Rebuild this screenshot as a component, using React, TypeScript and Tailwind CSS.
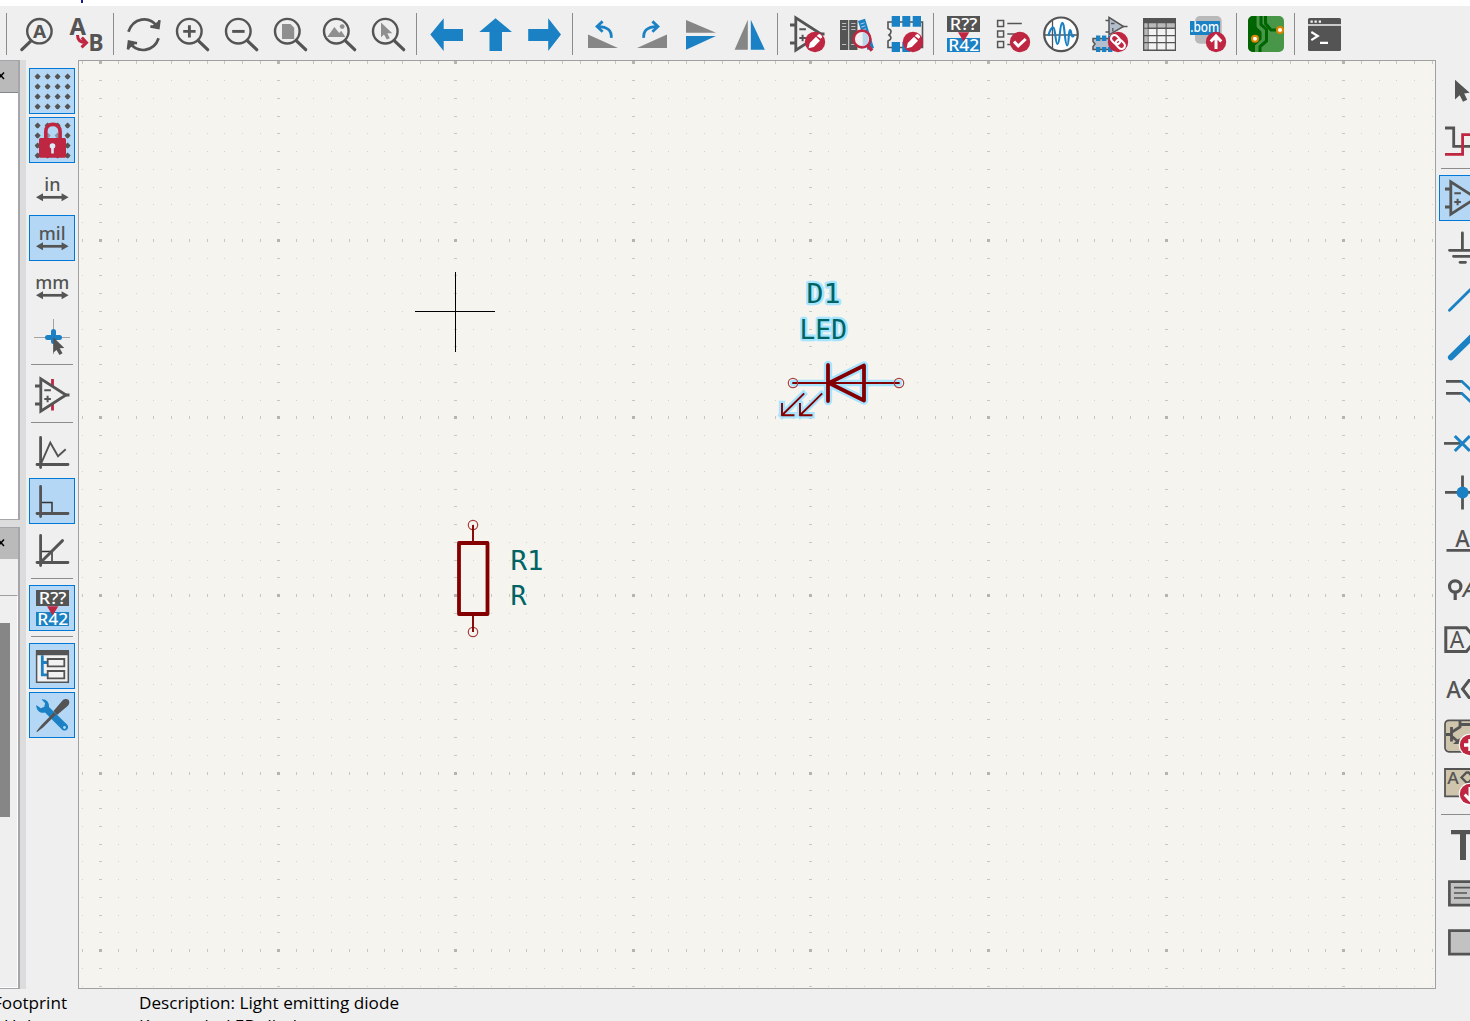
import React from "react";

const D = "#545454";
const B = "#1a81c4";
const R = "#bf2641";
const NOTO = '"Noto Sans", sans-serif';

type Kids = { children?: React.ReactNode };

function Icon({ children }: Kids) {
  return (
    <svg width="36" height="36" viewBox="0 0 36 36" fill="none" className="block shrink-0 overflow-visible">
      {children}
    </svg>
  );
}

function Label({ x, y, size, w, color = D, weight = 600, children }: { x: number; y: number; size: number; w?: number; color?: string; weight?: number; children: string }) {
  return (
    <text x={x} y={y} fontSize={size} fontWeight={weight} fontFamily={NOTO} fill={color} textLength={w} lengthAdjust="spacingAndGlyphs">
      {children}
    </text>
  );
}

function Badge({ kind }: { kind: "edit" | "check" | "link" | "up" | "plus" | "down" }) {
  return (
    <g>
      <circle cx="26" cy="26" r="10.2" fill={R} />
      {kind === "edit" && <path d="M19.6 32.2l1.2-5.200 6.200-6.200 4 4-6.200 6.200zM27.800 20l1.500-1.500q1.300-1 2.700.400t1.200 2.400l-1.500 1.500z" fill="#fff" />}
      {kind === "check" && <path d="M20 25.5l4.2 4.5 7.5-7" stroke="#fff" strokeWidth="3" />}
      {kind === "link" && (
        <g stroke="#fff" strokeWidth="2.100" transform="rotate(45 26 26)">
          <rect x="17.600" y="22.600" width="10.200" height="6.800" rx="3.400" />
          <rect x="24.200" y="22.600" width="10.200" height="6.800" rx="3.400" />
        </g>
      )}
      {kind === "up" && <path d="M26 33V20.5M20.7 25.5L26 20l5.3 5.5" stroke="#fff" strokeWidth="3" />}
      {kind === "plus" && <path d="M26 20v12M20 26h12" stroke="#fff" strokeWidth="3.4" />}
      {kind === "down" && <path d="M26 19v12.5M20.7 26.5L26 32l5.3-5.5" stroke="#fff" strokeWidth="3" />}
    </g>
  );
}

const Find = () => (
  <Icon>
    <circle cx="20.4" cy="15.2" r="12.2" stroke={D} strokeWidth="2.4" />
    <path d="M12 24.8L2.8 33.6" stroke={D} strokeWidth="3.2" strokeLinecap="round" />
    <Label x={13.9} y={21.6} size={18.5} w={13.2} weight={700}>A</Label>
  </Icon>
);
const FindReplace = () => (
  <Icon>
    <Label x={1.5} y={18.6} size={22.5} w={16.5} weight={700}>A</Label>
    <Label x={20.5} y={34.8} size={22.5} w={15} weight={700}>B</Label>
    <path d="M9.5 19c0 5 2.5 7.6 8.5 7.7M13.8 21.6l4.7 5.1-5 4.7" stroke={R} strokeWidth="3" />
  </Icon>
);
const Refresh = () => (
  <Icon>
    <path d="M3.4 15.8C8 2 24-1 32.3 10.5M34.4 4.2l-1 7.8-8-1.6M33.6 22.3C29 36 12 38 4.7 26.3M3 33.5l1-7.8 8 1.6" stroke={D} strokeWidth="2.7" />
    <path d="M34.4 4.2l-1 7.8-7-1.6zM3 33.5l1-7.8 7 1.6z" fill={D} />
  </Icon>
);
function Lens({ children }: Kids) {
  return (
    <Icon>
      {children}
      <circle cx="15.3" cy="15.2" r="12.3" stroke={D} strokeWidth="2.4" />
      <path d="M24.5 24.8l9.2 8.9" stroke={D} strokeWidth="3.2" strokeLinecap="round" />
    </Icon>
  );
}
const ZoomIn = () => <Lens><path d="M9.2 15.4h12.4M15.4 9.2v12.4" stroke={D} strokeWidth="2.9" /></Lens>;
const ZoomOut = () => <Lens><path d="M9.2 15.4h12.4" stroke={D} strokeWidth="2.9" /></Lens>;
const ZoomPage = () => <Lens><path d="M10 8h8.5l3.7 3.7V23H10z" fill="#8f8f8f" /></Lens>;
const ZoomObjects = () => (
  <Lens>
    <path d="M6.2 21l7.2-10 4.8 6 2-2.2 4.2 6.2z" fill="#8f8f8f" />
    <circle cx="21.2" cy="10.6" r="2.4" fill="#8f8f8f" />
  </Lens>
);
const ZoomSelection = () => <Lens><path d="M11 6.5v14.8l3-2.7 2.8 5 3-1.4-2.5-4.9h5z" fill="#8f8f8f" /></Lens>;

const ArrowL = () => <Icon><path d="M1.3 18.5L14.7 2.3V13H34v12H14.7v10z" fill={B} /></Icon>;
const ArrowU = () => <Icon><path d="M17.5 2.3L34 16H24v19H11.5V16H1.3z" fill={B} /></Icon>;
const ArrowR = () => <Icon><path d="M34 18.5L21.200 2.3V13h-20v12h20v10z" fill={B} /></Icon>;

function RotShape() {
  return (
    <>
      <path d="M3 18.5L33 32H3z" fill="#868686" />
      <path d="M26.3 21.8c.4-7-3.8-11.2-12.8-11.2M17.6 5.4l-5.5 5.1 5.5 5.2" stroke={B} strokeWidth="2.8" />
    </>
  );
}
const RotL = () => <Icon><RotShape /></Icon>;
const RotR = () => <Icon><g transform="translate(36 0) scale(-1 1)"><RotShape /></g></Icon>;
const FlipV = () => <Icon><path d="M3 4v12.7h30z" fill="#868686" /><path d="M3 20h30L3 33.7z" fill={B} /></Icon>;
const FlipH = () => <Icon><path d="M2.600 33.7h13.200v-30z" fill="#868686" /><path d="M18.800 33.7h14l-14-30z" fill={B} /></Icon>;

function OpAmp({ pins = false }: { pins?: boolean }) {
  return (
    <>
      {pins && <path d="M18.5 2v7M18.5 26.5v7" stroke={R} strokeWidth="2.8" />}
      <path d="M6.8 1.8v32.4L32 18z" stroke={D} strokeWidth="2.8" />
      <path d="M1 9h5.5M1 27h5.5M31 18h4.5" stroke={D} strokeWidth="2.8" />
      <path d="M10.3 13.2h6.6M10.3 22h6.6M13.6 18.7v6.6" stroke={D} strokeWidth="2" />
    </>
  );
}
const SymbolEdit = () => <Icon><OpAmp /><Badge kind="edit" /></Icon>;
const Library = () => (
  <Icon>
    <path d="M2 4h8.3v30H2zM11.2 4h8.3v30h-8.3z" fill={D} />
    <path d="M4 7.5h4.3M4 10.5h4.3M4 13.5h4.3M4 28.5h4.3M13.2 7.5h4.3M13.2 10.5h4.3M13.2 13.5h4.3M13.2 28.5h4.3" stroke="#bbb" strokeWidth="1" />
    <path d="M20 5l7-2.2L36 32l-6.5 2z" fill={B} />
    <path d="M22.5 8l4-1.2M23.4 11l4-1.2M24.3 14l4-1.2" stroke="#a8cde8" strokeWidth="1" />
    <circle cx="24" cy="23" r="8.4" fill="#f0f0f0" stroke={R} strokeWidth="2.6" />
    <path d="M24.600 16v14.500a7.400 7.400 0 0 0 0-14.500" fill="#b9d5ec" />
    <path d="M29.500 29.200l4.500 5.500" stroke={R} strokeWidth="3.400" />
  </Icon>
);
const FootprintEdit = () => (
  <Icon>
    <path d="M1 6h34.500v25.500H1V25q3-1.500 3-3t-2-3q2-1.500 2-3.500t-3-3z" fill="#f0f0f0" stroke={D} strokeWidth="1.600" />
    <path d="M4.700 0H13v10.700H4.700zM15.300 0h8v10.700h-8zM25.700 0H34v10.700h-8.300zM4.700 26H13v10H4.700zM15.300 26h8v10h-8z" fill={B} />
    <Badge kind="edit" />
  </Icon>
);
const Annotate = () => (
  <Icon>
    <path d="M2 0h33v16H2z" fill={D} />
    <path d="M2 22h33v14H2z" fill={B} />
    <Label x={4.800} y={13.500} size={16} w={27.500} color="#fff" weight={500}>R??</Label>
    <Label x={3.200} y={34.700} size={16.300} w={31} color="#fff" weight={500}>R42</Label>
    <path d="M13 16.300h11.300L18.600 25.500z" fill={R} />
  </Icon>
);
const Erc = () => (
  <Icon>
    <path d="M3.600 4.600h6v6h-6zM3.600 15h6v6h-6zM3.600 25.600h6v6h-6z" stroke={D} strokeWidth="1.500" />
    <path d="M13.300 7.500h14.500M13.300 18h8M13.300 28.500h5" stroke={D} strokeWidth="1.300" />
    <Badge kind="check" />
  </Icon>
);
const Simulator = () => (
  <Icon>
    <circle cx="18" cy="18.300" r="16.800" fill="#fff" stroke={D} strokeWidth="2.200" />
    <path d="M9.500 4v28M2 19h32.500" stroke={D} strokeWidth="1.300" />
    <path d="M5.500 20c1-6 3.500-9 5-8.300 2 .8 1.800 16.300 4 16.300 2.700 0 2-20.200 4.700-21 2.800-.6 2.300 22.400 5 22.400 2 0 1-14.900 2.800-15.400 1.300-.3 1.200 7 2.800 6.500.6-.2.900-.800 1.200-1.500" stroke={B} strokeWidth="2.100" />
  </Icon>
);
const Assign = () => (
  <Icon>
    <path d="M17 1.300v17.500l14.500-8.300z" fill="#b3bfcc" stroke={D} strokeWidth="1.500" />
    <path d="M13.500 4.500H17M13.500 16H17M31 10.500h4.500M19 7.500h3.500M20.800 12v3.500" stroke={D} strokeWidth="1.300" />
    <path d="M1 22.500h23v11H1v-3l2-2.500-2-2.500z" fill="#b3bfcc" stroke={D} strokeWidth="1.500" />
    <path d="M4 19.500h4.300V25H4zM10 19.500h4.300V25H10zM16 19.500h4.300V25H16zM4 31h4.300v5H4zM10 31h4.300v5H10zM16 31h4.300v5H16z" fill={B} />
    <Badge kind="link" />
  </Icon>
);
const Table = () => (
  <Icon>
    <path d="M2 2h33v33H2z" fill={D} />
    <path d="M3.300 7.200h30.500v4.500H3.300zM3.300 7.200h3.500v26.300H3.300z" fill="#b9b9b9" />
    <path d="M7.600 13h7.700v6H7.600zM16.500 13h8v6h-8zM25.700 13h8.100v6h-8.100zM7.600 20.200h7.700v5.800H7.600zM16.500 20.200h8v5.800h-8zM25.700 20.200h8.100v5.800h-8.100zM7.600 27.300h7.700v6.200H7.600zM16.500 27.300h8v6.200h-8zM25.700 27.300h8.100v6.200h-8.100z" fill="#f2f2f2" />
    <path d="M7.200 7v6M15.900 7v6M25.100 7v6M3 12.300h31M3 19.600h4M3 26.600h4" stroke={D} strokeWidth="1.100" />
  </Icon>
);
const Bom = () => (
  <Icon>
    <rect x="5" y="0" width="26.700" height="27.700" rx="5" fill="#b9b9b9" />
    <path d="M0 5h30v14H0z" fill={B} />
    <Label x={0.200} y={15.800} size={14.500} w={29} color="#fff" weight={500}>.bom</Label>
    <Badge kind="up" />
  </Icon>
);
const Pcb = () => (
  <Icon>
    <rect width="36" height="36" rx="5" fill="#489648" />
    <path d="M5 0h4v11.500l5 4.500v8l-7 5.500V36H5a5 5 0 0 1-5-5V5a5 5 0 0 1 5-5z" fill="#006400" />
    <path d="M13 0v8.500l5.500 5V25L12 30.500V36" stroke="#006400" strokeWidth="3" />
    <path d="M17.500 0v7.500l5.500 6.500h8" stroke="#006400" strokeWidth="3" />
    <path d="M9.800 0v10l5 4.500v9.500L8.500 30v6" stroke="#489648" strokeWidth="2.500" />
    <circle cx="7" cy="22.700" r="3" fill="#fff" stroke="#de8500" strokeWidth="2" />
    <circle cx="32" cy="14" r="3" fill="#fff" stroke="#de8500" strokeWidth="2" />
  </Icon>
);
const Terminal = () => (
  <Icon>
    <rect x="2" y="2" width="33" height="33" rx="1.500" fill={D} />
    <path d="M2 9h33" stroke="#f2f2f2" strokeWidth="1.600" />
    <path d="M4.500 4.500h2.300v2.200H4.500zM8.500 4.500h2.300v2.200H8.500zM12.700 4.500H15v2.200h-2.300z" fill="#f2f2f2" />
    <path d="M5.300 16l6.500 4-6.500 4.200M14 26.800h8" stroke="#fff" strokeWidth="2.200" />
  </Icon>
);

function Dots() {
  const steps = [3.600, 13.600, 23.600, 33.600];
  return (
    <>
      {steps.map((y) =>
        steps.map((x) => (
          <path key={`${x}-${y}`} transform={`translate(${x} ${y})`} d="M0-3L1.600-1.600 3 0 1.600 1.600 0 3-1.600 1.600-3 0-1.600-1.600z" fill={D} />
        ))
      )}
    </>
  );
}
const Grid = () => <Icon><Dots /></Icon>;
const GridLock = () => (
  <Icon>
    <Dots />
    <path d="M11.800 17V9.500c0-9.500 14.300-9.500 14.300 0V17" fill="#b3d7f5" fillOpacity=".5" stroke={R} strokeWidth="3.600" />
    <rect x="5" y="16" width="27" height="19.800" rx="1.500" fill={R} />
    <circle cx="18.500" cy="24" r="2.800" fill="#dcecf8" />
    <path d="M17.200 25h2.600v6.500h-2.600z" fill="#dcecf8" />
  </Icon>
);
function Unit({ x, children }: { x: number; children: string }) {
  return (
    <Icon>
      <Label x={x} y={19.800} size={18} weight={500}>{children}</Label>
      <path d="M6 26.300h25" stroke={D} strokeWidth="2.700" />
      <path d="M2 26.300l7-4v8zM34.600 26.300l-7-4v8z" fill={D} />
    </Icon>
  );
}
const Inches = () => <Unit x={10.300}>in</Unit>;
const Mils = () => <Unit x={4.800}>mil</Unit>;
const Millis = () => <Unit x={1.300}>mm</Unit>;
const Crosshair = () => (
  <Icon>
    <path d="M0 19.500h36M19.500 1v35" stroke="#a3a3a3" strokeWidth="1" />
    <path d="M13.500 19.500h12M19.500 13.500v10" stroke={B} strokeWidth="5" strokeLinecap="round" />
    <path d="M19.300 19.300v15.500l3.200-2.900 3 5 3-1.600-2.800-5 4.600-.4z" fill={D} />
  </Icon>
);
const HiddenPins = () => <Icon><OpAmp pins /></Icon>;
const Axes = () => <path d="M6.600 3.500v30M3 30.500h31" stroke={D} strokeWidth="2.800" strokeLinecap="round" />;
const FreeAngle = () => <Icon><Axes /><path d="M6.700 30.300l9.600-21.600L24 22.300l7.700-7" stroke={D} strokeWidth="1.900" /></Icon>;
const RightAngle = () => <Icon><path d="M7.700 19.500H18v10" stroke="#333" strokeWidth="1.500" /><Axes /></Icon>;
const HalfAngle = () => <Icon><path d="M7.700 19.500H18v10" stroke="#333" strokeWidth="1.500" /><Axes /><path d="M7 30L28.500 8.600" stroke={D} strokeWidth="2.900" strokeLinecap="round" /></Icon>;
const Hierarchy = () => (
  <Icon>
    <path d="M2.600 3h31.700v31.200H2.600z" fill="#f2f2f2" stroke={D} strokeWidth="1.500" />
    <path d="M2 2h33v5.300H2z" fill={D} />
    <path d="M8.300 7.300v19.500h5M8.300 14.500h5" stroke={B} strokeWidth="2.800" />
    <path d="M13.700 11h16.600v7.300H13.700zM13.700 23h16.600v7.300H13.700z" fill="#f2f2f2" stroke={D} strokeWidth="1.800" />
  </Icon>
);
const Tools = () => (
  <Icon>
    <path d="M7.500 2.200c4-.6 8 2.500 7.500 7.800l18 17.500c3 3.500-1 8-4.800 5.300L11 15.500C6 17 2 13 2.200 8l4.600 3.300 3.500-1.500.8-3.500z" fill={B} />
    <circle cx="30.500" cy="30.500" r="1.400" fill="#b3d7f5" />
    <path d="M22 17.500L9 30.500 3.200 35l-.8-.8L7.500 28 20 15.200" fill={D} />
    <path d="M19.500 14l9-10.500c1.500-2 7-2.500 6.800 2-.1 2-1 2.800-2.300 4L23 18z" fill={D} />
  </Icon>
);

const Arrow = () => <Icon><path d="M11 6.800v19.700l4.700-4.200 3.300 6.400 4.200-2-3-6.200 5.500-.7z" fill={D} /></Icon>;
const Highlight = () => (
  <Icon>
    <path d="M1 6h8.700v18.300H36" stroke={D} strokeWidth="2.800" />
    <path d="M1 32.300h17.600V12.700H36" stroke={R} strokeWidth="2.800" />
  </Icon>
);
const PlaceSymbol = () => <Icon><OpAmp /></Icon>;
const Power = () => <Icon><path d="M18.400 4v17M5.500 21.300h26M9.500 27.300H28M16 33.300h5.500" stroke={D} strokeWidth="2.800" strokeLinecap="round" /></Icon>;
const Wire = () => <Icon><path d="M5.500 32.200L33 5" stroke={B} strokeWidth="2.800" strokeLinecap="round" /></Icon>;
const Bus = () => <Icon><path d="M6.900 30.300L34 4" stroke={B} strokeWidth="6" strokeLinecap="round" /></Icon>;
const BusEntry = () => (
  <Icon>
    <path d="M2 5.300h15.500M2 17.300h15.500" stroke={D} strokeWidth="2.800" />
    <path d="M16.500 5.300h1.300L30 17M16.500 17.300h1.300L30 29" stroke={B} strokeWidth="2.800" />
  </Icon>
);
const NoConnect = () => <Icon><path d="M0 18.400h16" stroke={D} strokeWidth="2.700" /><path d="M10.800 11l15 15M10.800 26l15-15" stroke={B} strokeWidth="3" /></Icon>;
const Junction = () => <Icon><path d="M18.500 1.500v34M1 18.400h34" stroke={D} strokeWidth="2.800" /><circle cx="18.600" cy="18.500" r="6" fill={B} /></Icon>;
const NetLabel = () => <Icon><Label x={11.300} y={23.600} size={23} w={14.500} weight={500}>A</Label><path d="M2.500 27.400H36" stroke={D} strokeWidth="2.700" /></Icon>;
const NetClass = () => (
  <Icon>
    <circle cx="11.200" cy="14.500" r="5.700" stroke={D} strokeWidth="3.200" />
    <path d="M11.200 20v8" stroke={D} strokeWidth="3.200" />
    <g transform="skewX(-12)"><Label x={23} y={25.300} size={23} w={14.500} weight={500}>A</Label></g>
  </Icon>
);
const GlobalLabel = () => (
  <Icon>
    <path d="M1.800 6.800h20.500L32 18.500l-9.500 12H1.800z" stroke={D} strokeWidth="3" />
    <Label x={5.800} y={26.800} size={23} w={14.500} weight={400}>A</Label>
  </Icon>
);
const HierLabel = () => (
  <Icon>
    <Label x={2.300} y={27.500} size={23} w={14.800} weight={500}>A</Label>
    <path d="M27 10.500h-2l-6.500 8.500 6.500 8.500h2" stroke={D} strokeWidth="3" />
  </Icon>
);
const Sheet = () => (
  <Icon>
    <rect x="1" y="1.300" width="34" height="31.500" rx="4" fill="#cfc4ac" stroke={D} strokeWidth="1.700" />
    <path d="M2 15.500h6M7.500 8v14.500M8 13l8-5V2M8 17.500l7 6M15 5.500h14" stroke={D} strokeWidth="2.800" />
    <path d="M9 25h6.500v-6z" fill={D} />
    <circle cx="26" cy="26" r="11.300" fill="#fff" />
    <Badge kind="plus" />
  </Icon>
);
const SheetPin = () => (
  <Icon>
    <path d="M1 1h34v27.300H1z" fill="#cfc4ac" stroke={D} strokeWidth="1.800" />
    <Label x={3.200} y={15.600} size={17} w={11.500} weight={500}>A</Label>
    <path d="M17.500 9.500l5-5h2l5 5-5 5h-2z" stroke={D} strokeWidth="2.300" />
    <circle cx="26" cy="26" r="11.300" fill="#fff" />
    <Badge kind="down" />
  </Icon>
);
const TextTool = () => <Icon><path d="M7 3h24v4.300H22V33h-6V7.300H7z" fill={D} /></Icon>;
const TextBox = () => (
  <Icon>
    <path d="M5.400 5.700h30v23.500h-30z" fill="#c2c2c2" stroke={D} strokeWidth="2.700" />
    <path d="M10 11.700h22M10 17h13M10 22h22" stroke={D} strokeWidth="1.700" />
  </Icon>
);
const RectTool = () => <Icon><path d="M5.400 5.700h30v23.500h-30z" fill="#c2c2c2" stroke={D} strokeWidth="2.700" /></Icon>;

function Tool({ on = false, children }: Kids & { on?: boolean }) {
  return (
    <button className={"flex h-[46px] w-[46px] shrink-0 items-center justify-center " + (on ? "border border-[#0078d7] bg-[#b3d7f5]" : "")}>
      {children}
    </button>
  );
}
const Group = ({ children }: Kids) => <div className="flex shrink-0 gap-[3px]">{children}</div>;
const Rule = ({ space }: { space: string }) => <div className={"h-[42px] w-px shrink-0 bg-[#8c8c8c] " + space} />;
const HRule = ({ space }: { space: string }) => <div className={"h-px w-[42px] shrink-0 bg-[#8c8c8c] " + space} />;
const Stack = ({ children }: Kids) => <div className="flex shrink-0 flex-col gap-[3px]">{children}</div>;

function TopBar() {
  return (
    <div className="flex h-[54px] shrink-0 items-center bg-[#efefef] pt-[2px]">
      <Rule space="ml-[6px] mr-[7px]" />
      <Group><Tool><Find /></Tool><Tool><FindReplace /></Tool></Group>
      <Rule space="ml-[4px] mr-[6px]" />
      <Group>
        <Tool><Refresh /></Tool><Tool><ZoomIn /></Tool><Tool><ZoomOut /></Tool>
        <Tool><ZoomPage /></Tool><Tool><ZoomObjects /></Tool><Tool><ZoomSelection /></Tool>
      </Group>
      <Rule space="ml-[5px] mr-[7px]" />
      <Group><Tool><ArrowL /></Tool><Tool><ArrowU /></Tool><Tool><ArrowR /></Tool></Group>
      <Rule space="ml-[4px] mr-[7px]" />
      <Group><Tool><RotL /></Tool><Tool><RotR /></Tool><Tool><FlipV /></Tool><Tool><FlipH /></Tool></Group>
      <Rule space="ml-[4px] mr-[6px]" />
      <Group><Tool><SymbolEdit /></Tool><Tool><Library /></Tool><Tool><FootprintEdit /></Tool></Group>
      <Rule space="ml-[5px] mr-[6px]" />
      <Group>
        <Tool><Annotate /></Tool><Tool><Erc /></Tool><Tool><Simulator /></Tool>
        <Tool><Assign /></Tool><Tool><Table /></Tool><Tool><Bom /></Tool>
      </Group>
      <Rule space="ml-[5px] mr-[6px]" />
      <Group><Tool><Pcb /></Tool></Group>
      <Rule space="ml-[5px] mr-[6px]" />
      <Group><Tool><Terminal /></Tool></Group>
    </div>
  );
}

function CloseMark() {
  return (
    <svg width="7" height="8" viewBox="0 0 7 8" className="mb-[2px] block">
      <path d="M-2 .5L4 7M4 .5L-2 7" stroke="#000" strokeWidth="1.500" />
    </svg>
  );
}

function SidePanels() {
  return (
    <div className="flex w-[26px] shrink-0 flex-col bg-[#dcdcdc] pr-[6px]">
      <div className="flex h-[460px] flex-col border-r-2 border-b border-t border-[#a5a5aa]">
        <div className="flex h-[31px] items-center bg-[#bababa]"><CloseMark /></div>
        <div className="flex-1 border-t border-[#828790] bg-white" />
      </div>
      <div className="mt-[7px] flex flex-1 flex-col border-b border-r-2 border-t border-[#a5a5aa]">
        <div className="flex h-[31px] items-center bg-[#bababa]"><CloseMark /></div>
        <div className="h-[36px] bg-[#efefef]" />
        <div className="flex-1 border-b border-r border-t border-b-white border-r-white border-t-[#a0a0a0] bg-[#efefef] pt-[27px]">
          <div className="h-[194px] w-[10px] bg-[#868686]" />
        </div>
      </div>
    </div>
  );
}

function LeftTools() {
  return (
    <div className="flex w-[52px] shrink-0 flex-col bg-[#efefef] pl-[3px] pt-[8px]">
      <Stack>
        <Tool on><Grid /></Tool><Tool on><GridLock /></Tool><Tool><Inches /></Tool>
        <Tool on><Mils /></Tool><Tool><Millis /></Tool><Tool><Crosshair /></Tool>
      </Stack>
      <HRule space="ml-[2px] mt-[5px] mb-[7px]" />
      <Tool><HiddenPins /></Tool>
      <HRule space="ml-[2px] mt-[4px] mb-[6px]" />
      <Stack><Tool><FreeAngle /></Tool><Tool on><RightAngle /></Tool><Tool><HalfAngle /></Tool></Stack>
      <HRule space="ml-[2px] mt-[5px] mb-[6px]" />
      <Tool on><Annotate /></Tool>
      <HRule space="ml-[2px] mt-[5px] mb-[6px]" />
      <Stack><Tool on><Hierarchy /></Tool><Tool on><Tools /></Tool></Stack>
    </div>
  );
}

function RightTools() {
  return (
    <div className="flex w-[34px] shrink-0 flex-col overflow-hidden bg-[#efefef] pl-[3px] pt-[8px]">
      <Stack><Tool><Arrow /></Tool><Tool><Highlight /></Tool></Stack>
      <HRule space="ml-[2px] mt-[5px] mb-[6px]" />
      <Stack>
        <Tool on><PlaceSymbol /></Tool><Tool><Power /></Tool><Tool><Wire /></Tool><Tool><Bus /></Tool>
        <Tool><BusEntry /></Tool><Tool><NoConnect /></Tool><Tool><Junction /></Tool><Tool><NetLabel /></Tool>
        <Tool><NetClass /></Tool><Tool><GlobalLabel /></Tool><Tool><HierLabel /></Tool><Tool><Sheet /></Tool>
        <Tool><SheetPin /></Tool>
      </Stack>
      <HRule space="ml-[2px] mt-[5px] mb-[7px]" />
      <Stack><Tool><TextTool /></Tool><Tool><TextBox /></Tool><Tool><RectTool /></Tool></Stack>
    </div>
  );
}

const STEP = 17.755;
const gridDots: { x: number; y: number; mx: boolean; my: boolean }[] = [];
for (let i = -1; i < 76; i++) {
  for (let j = 0; j < 53; j++) {
    const x = Math.round(100.2 + i * STEP);
    const y = Math.round(62.4 + j * STEP);
    if (x < 1434 && y < 988) gridDots.push({ x, y, mx: i % 10 === 0, my: j % 10 === 0 });
  }
}

function SchText({ x, y, w, halo = false, children }: { x: number; y: number; w: number; halo?: boolean; children: string }) {
  return (
    <text
      x={x}
      y={y}
      textLength={w}
      lengthAdjust="spacingAndGlyphs"
      fontSize={26.5}
      fontFamily='"DejaVu Sans Mono", monospace'
      fill="#006464"
      stroke={halo ? "#a6e4ff" : "none"}
      strokeWidth={halo ? 4.500 : 0}
      strokeLinejoin="round"
      paintOrder="stroke"
    >
      {children}
    </text>
  );
}

function Led({ glow }: { glow: boolean }) {
  const c = glow ? "#a6e4ff" : "#840000";
  const e = glow ? 4.500 : 0;
  return (
    <g stroke={c} fill="none" strokeLinecap="round" strokeLinejoin="round">
      <path d="M793 383h106" strokeWidth={1.900 + e} />
      <path d="M828 365v36M864 365.500v35L829 383z" strokeWidth={3.800 + e} />
      <path d="M803.500 394L782 415.200M782 404v11.200h11.500M821.500 394L800 415.200M800 404v11.200h11.500" strokeWidth={1.900 + e} strokeLinecap="square" />
    </g>
  );
}

function Canvas() {
  return (
    <div className="w-[1358px] shrink-0 border border-[#a0a0a0] bg-[#f5f4ef]">
      <svg width="1356" height="927" viewBox="79 61 1356 927" className="block">
        <g shapeRendering="crispEdges">
          {gridDots.map((d) => (
            <rect
              key={`${d.x}-${d.y}`}
              x={d.mx ? d.x - 1 : d.x}
              y={d.my ? d.y - 1 : d.y}
              width={d.mx ? 3 : 1}
              height={d.my ? 3 : 1}
              fill={d.mx && d.my ? "#b4b4b4" : d.mx || d.my ? "#c6c6c3" : "#d2d2ce"}
            />
          ))}
        </g>
        <path d="M415 311.500h80M455.500 272v80" stroke="#000" strokeWidth="1" />
        <Led glow />
        <Led glow={false} />
        <g fill="none" stroke="#a84040" strokeWidth="1.200">
          <circle cx="793" cy="383" r="4.700" />
          <circle cx="899" cy="383" r="4.700" />
          <circle cx="473" cy="525" r="4.700" />
          <circle cx="473" cy="632" r="4.700" />
        </g>
        <path d="M473 525v18M473 614v18" stroke="#840000" strokeWidth="1.900" />
        <path d="M459 543h28.500v71H459z" fill="none" stroke="#840000" strokeWidth="3.800" strokeLinejoin="round" />
        <SchText x={806.500} y={303} w={34} halo>D1</SchText>
        <SchText x={799.500} y={338.500} w={47.500} halo>LED</SchText>
        <SchText x={510.500} y={569.500} w={33}>R1</SchText>
        <SchText x={510.500} y={604.500} w={16}>R</SchText>
      </svg>
    </div>
  );
}

export default function App() {
  return (
    <div className="flex h-[1021px] w-[1470px] flex-col overflow-hidden bg-[#efefef]">
      <div className="h-[6px] shrink-0 bg-white pl-[81px]">
        <div className="h-[3px] w-[2px] bg-[#1a1a9c]" />
      </div>
      <TopBar />
      <div className="flex h-[929px] shrink-0">
        <SidePanels />
        <LeftTools />
        <Canvas />
        <RightTools />
      </div>
      <div className="flex h-8 shrink-0 overflow-hidden whitespace-nowrap font-['Open_Sans',sans-serif] text-[17.15px] leading-[23px] text-black">
        <div className="flex w-[139px] shrink-0 flex-col pt-[2px]">
          <span className="-ml-[7px]">Footprint</span>
          <span className="pl-1">Unknown</span>
        </div>
        <div className="flex flex-col pt-[2px]">
          <span>Description: Light emitting diode</span>
          <span>Keywords: LED diode</span>
        </div>
      </div>
    </div>
  );
}
